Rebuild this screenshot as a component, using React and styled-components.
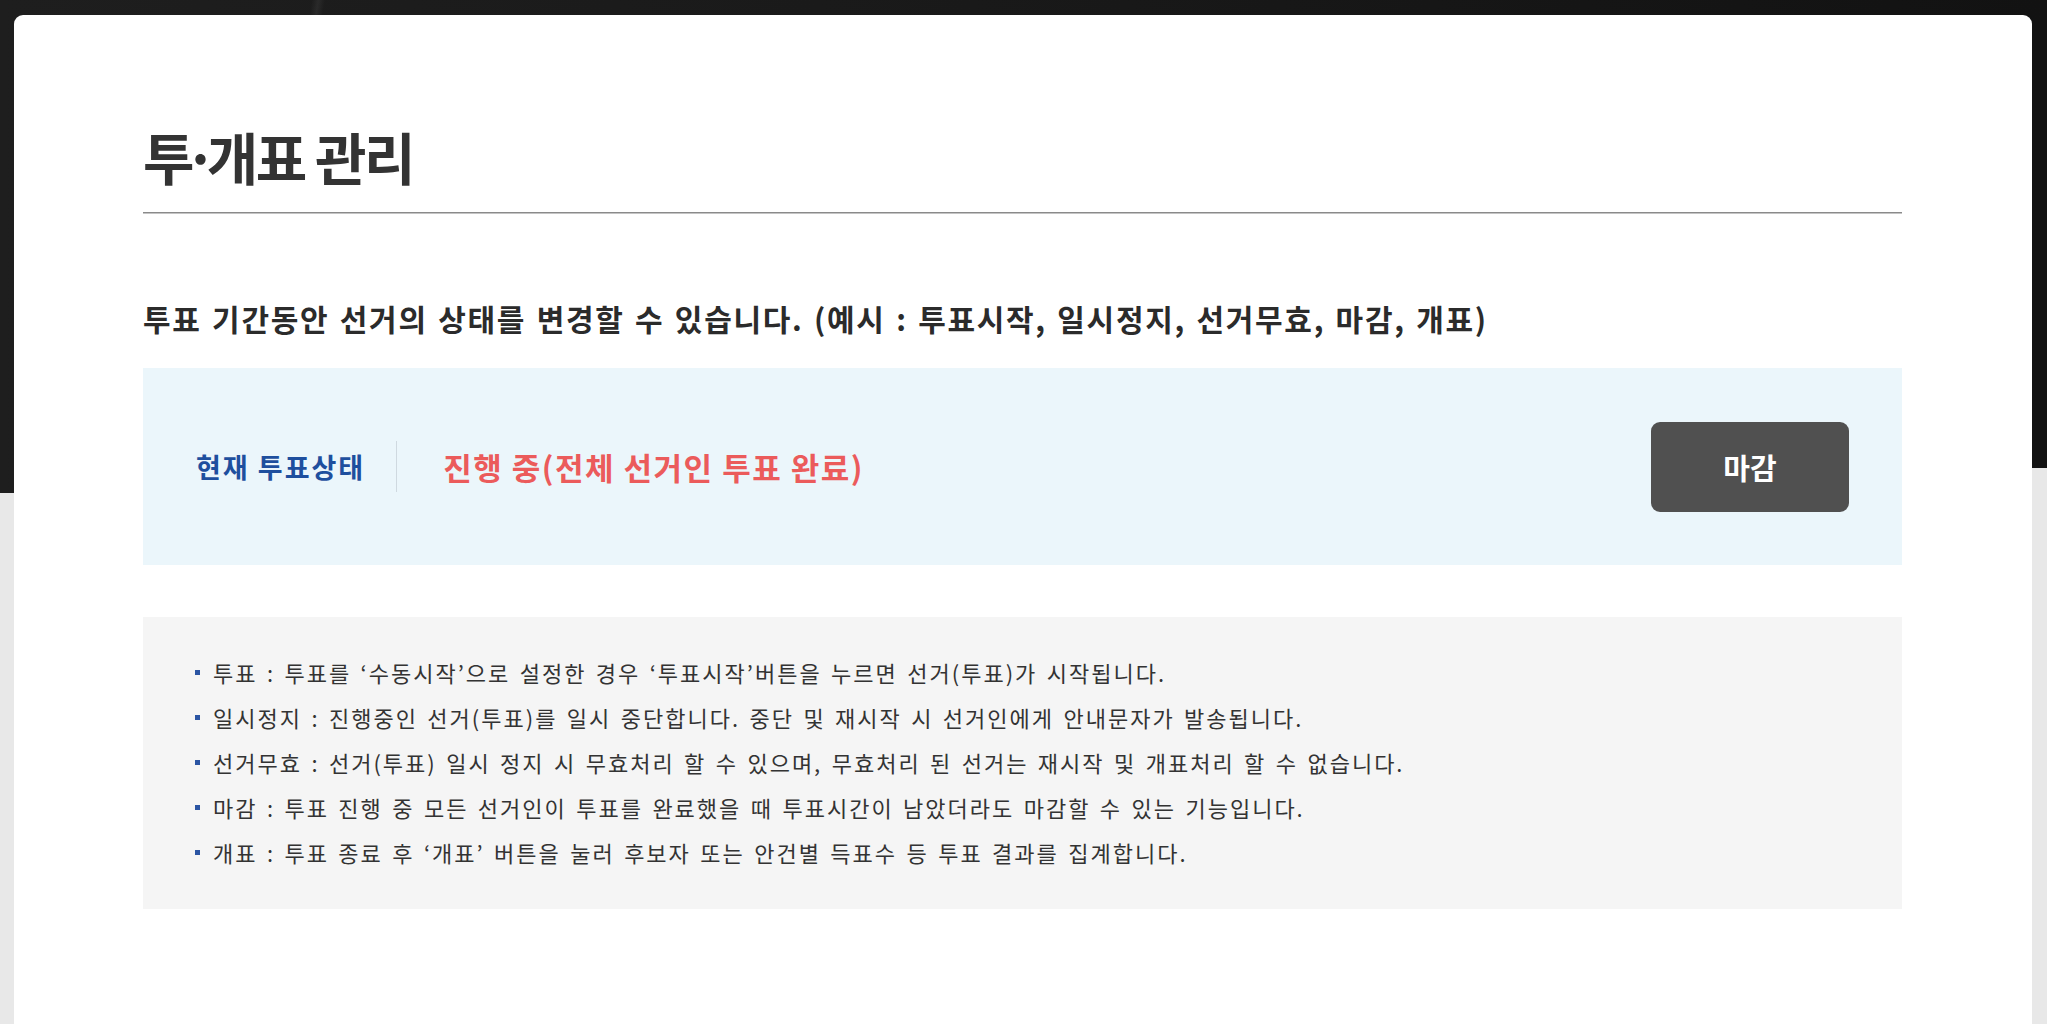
import React from 'react';
import styled, { createGlobalStyle } from 'styled-components';

const GlobalStyle = createGlobalStyle`
  html, body {
    margin: 0;
    padding: 0;
  }
  body {
    font-family: "Noto Sans CJK KR", "Noto Sans", sans-serif;
    color: #333;
  }
`;

const Page = styled.div`
  min-height: 100vh;
  padding: 15px 15px 0 14px;
  box-sizing: border-box;
  background-color: #e8e8e8;
  background-image:
    linear-gradient(179.3deg, transparent 0, transparent 493px, #e8e8e8 493px),
    linear-gradient(100deg, transparent 0, transparent 14%, rgba(255,255,255,0.06) 14.3%, transparent 14.6%, transparent 100%),
    linear-gradient(90deg, #1e1e1e 0%, #1a1a1a 40%, #121212 100%);
  background-size: 100% 1024px;
  background-repeat: no-repeat;
`;

const Card = styled.main`
  background: #fff;
  border-radius: 9px 9px 0 0;
  min-height: 1040px;
  padding: 113px 130px 0 129px;
  box-sizing: border-box;
`;

const Title = styled.h1`
  margin: 0;
  padding-bottom: 28px;
  border-bottom: 1px solid #8a8a8a;
  box-shadow: 0 1px 0 #c4c4c4;
  font-size: 56px;
  line-height: 1;
  font-weight: 700;
  letter-spacing: -2.5px;
  color: #333;
`;

// 투· : the dot sits tight against its neighbours
const TitleTight = styled.span`
  letter-spacing: -10.5px;
`;

const Lead = styled.p`
  margin: 90px 0 35px;
  font-size: 30px;
  line-height: 1;
  font-weight: 700;
  letter-spacing: 1.7px;
  word-spacing: 2px;
  color: #2b2b2b;
`;

const StatusBox = styled.section`
  display: flex;
  align-items: center;
  justify-content: space-between;
  height: 197px;
  padding: 0 53px;
  box-sizing: border-box;
  background: #ebf6fb;
`;

const StatusInfo = styled.div`
  display: flex;
  align-items: center;
`;

const StatusLabel = styled.span`
  font-size: 27px;
  font-weight: 700;
  letter-spacing: 2px;
  color: #1e4f9e;
  padding-right: 31px;
  border-right: 1px solid #cfd9e0;
  line-height: 51px;
`;

const StatusValue = styled.span`
  padding-left: 46px;
  font-size: 31px;
  font-weight: 700;
  color: #eb5b5b;
  letter-spacing: 1.5px;
`;

const ActionButton = styled.button`
  width: 198px;
  height: 90px;
  border: 0;
  border-radius: 9px;
  background: #505050;
  color: #fff;
  font-family: inherit;
  font-size: 29px;
  font-weight: 700;
  cursor: pointer;
`;

const NoteBox = styled.ul`
  list-style: none;
  margin: 52px 0 0;
  padding: 33px 52px 34px;
  background: #f5f5f5;
`;

const NoteItem = styled.li`
  display: flex;
  align-items: center;
  font-size: 22px;
  line-height: 45px;
  color: #333;
  letter-spacing: 2px;
  word-spacing: 2.5px;

  &::before {
    content: '';
    width: 5px;
    height: 5px;
    margin-right: 13px;
    background: #2b55a3;
    flex: none;
  }
`;

const notes = [
  '투표 : 투표를 ‘수동시작’으로 설정한 경우 ‘투표시작’버튼을 누르면 선거(투표)가 시작됩니다.',
  '일시정지 : 진행중인 선거(투표)를 일시 중단합니다. 중단 및 재시작 시 선거인에게 안내문자가 발송됩니다.',
  '선거무효 : 선거(투표) 일시 정지 시 무효처리 할 수 있으며, 무효처리 된 선거는 재시작 및 개표처리 할 수 없습니다.',
  '마감 : 투표 진행 중 모든 선거인이 투표를 완료했을 때 투표시간이 남았더라도 마감할 수 있는 기능입니다.',
  '개표 : 투표 종료 후 ‘개표’ 버튼을 눌러 후보자 또는 안건별 득표수 등 투표 결과를 집계합니다.',
];

export default function App() {
  return (
    <Page>
      <GlobalStyle />
      <Card>
        <Title>
          <TitleTight>투·</TitleTight>개표 관리
        </Title>
        <Lead>투표 기간동안 선거의 상태를 변경할 수 있습니다. (예시 : 투표시작, 일시정지, 선거무효, 마감, 개표)</Lead>
        <StatusBox>
          <StatusInfo>
            <StatusLabel>현재 투표상태</StatusLabel>
            <StatusValue>진행 중(전체 선거인 투표 완료)</StatusValue>
          </StatusInfo>
          <ActionButton type="button">마감</ActionButton>
        </StatusBox>
        <NoteBox>
          {notes.map((text, i) => (
            <NoteItem key={i}>{text}</NoteItem>
          ))}
        </NoteBox>
      </Card>
    </Page>
  );
}
